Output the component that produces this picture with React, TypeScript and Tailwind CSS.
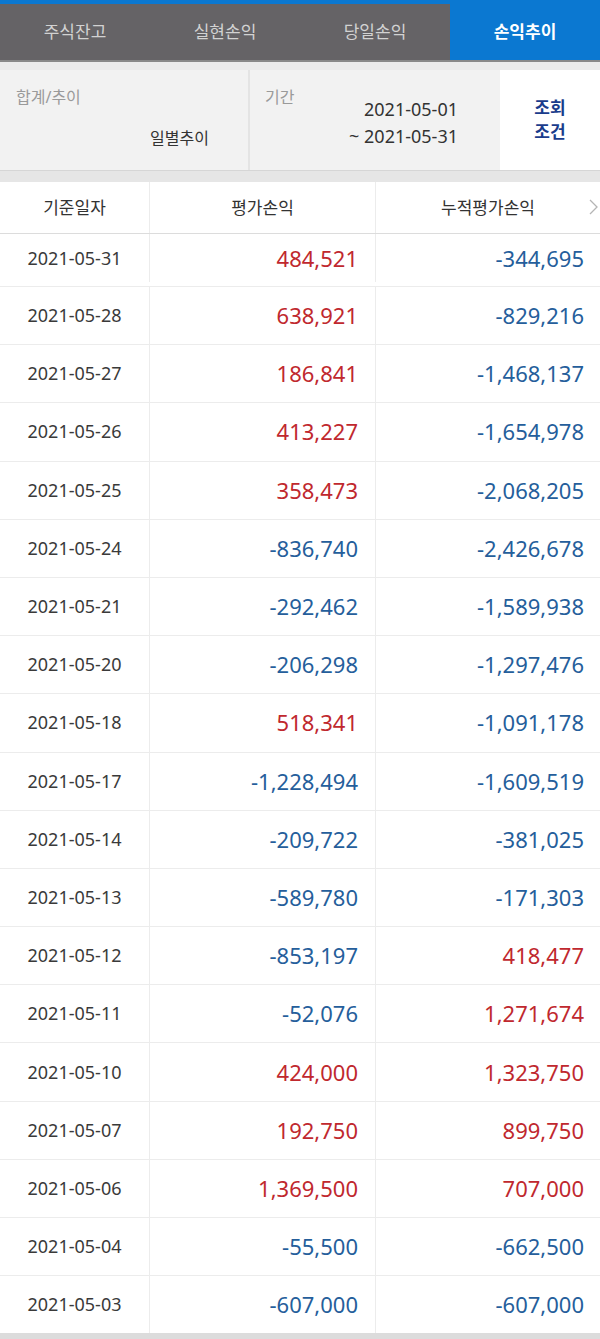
import React from "react";

type Row = { d: string; a: string; b: string };

const rows: Row[] = [
  { d: "2021-05-31", a: "484,521", b: "-344,695" },
  { d: "2021-05-28", a: "638,921", b: "-829,216" },
  { d: "2021-05-27", a: "186,841", b: "-1,468,137" },
  { d: "2021-05-26", a: "413,227", b: "-1,654,978" },
  { d: "2021-05-25", a: "358,473", b: "-2,068,205" },
  { d: "2021-05-24", a: "-836,740", b: "-2,426,678" },
  { d: "2021-05-21", a: "-292,462", b: "-1,589,938" },
  { d: "2021-05-20", a: "-206,298", b: "-1,297,476" },
  { d: "2021-05-18", a: "518,341", b: "-1,091,178" },
  { d: "2021-05-17", a: "-1,228,494", b: "-1,609,519" },
  { d: "2021-05-14", a: "-209,722", b: "-381,025" },
  { d: "2021-05-13", a: "-589,780", b: "-171,303" },
  { d: "2021-05-12", a: "-853,197", b: "418,477" },
  { d: "2021-05-11", a: "-52,076", b: "1,271,674" },
  { d: "2021-05-10", a: "424,000", b: "1,323,750" },
  { d: "2021-05-07", a: "192,750", b: "899,750" },
  { d: "2021-05-06", a: "1,369,500", b: "707,000" },
  { d: "2021-05-04", a: "-55,500", b: "-662,500" },
  { d: "2021-05-03", a: "-607,000", b: "-607,000" },
];

const font = { fontFamily: '"Noto Sans", "Noto Sans CJK KR", sans-serif' };

function Num({ v }: { v: string }) {
  const neg = v.startsWith("-");
  return (
    <span className={neg ? "text-[#255e9b]" : "text-[#c0282e]"}>{v}</span>
  );
}

export default function App() {
  const tabs = ["주식잔고", "실현손익", "당일손익", "손익추이"];
  return (
    <div className="w-[600px] h-[1339px] overflow-hidden bg-[#e6e6e6]" style={font}>
      {/* Tabs */}
      <div className="bg-[#0b78d1] pt-[4px]">
        <div className="flex h-[56px] bg-[#656366]">
          {tabs.map((t, i) => (
            <div
              key={t}
              className={
                i === 3
                  ? "w-[150px] flex items-center justify-center bg-[#0b78d1] text-white font-bold text-[17px] -mt-[4px] pt-[4px] h-[60px]"
                  : "w-[150px] flex items-center justify-center text-[#d2d2d2] text-[17px]"
              }
            >
              {t}
            </div>
          ))}
        </div>
      </div>
      <div className="h-[2px] bg-[#8a8a8a]" />
      <div className="h-[8px] bg-[#ececec]" />
      {/* Filter */}
      <div className="flex h-[100px]">
        <div className="w-[248px] bg-[#f2f2f2] relative px-[16px] pt-[19px]">
          <div className="text-[16px] text-[#9a9a9a] leading-none">합계/추이</div>
          <div className="absolute right-[39px] top-[56px] text-[16px] text-[#333]">일별추이</div>
        </div>
        <div className="w-[2px] bg-[#e4e4e4]" />
        <div className="w-[250px] bg-[#f2f2f2] relative pl-[15px] pt-[19px]">
          <div className="text-[16px] text-[#9a9a9a] leading-none">기간</div>
          <div className="absolute right-[42px] top-[26px] text-right text-[18px] text-[#333] leading-[27px]">
            <div>2021-05-01</div>
            <div>~ 2021-05-31</div>
          </div>
        </div>
        <div className="flex-1 bg-white flex flex-col items-center justify-center text-[#1a3c8c] font-bold text-[17px] leading-[24px]">
          <div>조회</div>
          <div>조건</div>
        </div>
      </div>
      <div className="h-[1px] bg-[#d6d6d6]" />
      <div className="h-[11px] bg-[#e6e6e6]" />
      {/* Table */}
      <div className="bg-white">
        <div className="flex h-[52px] border-b border-[#dcdcdc] text-[17px] text-[#333]">
          <div className="w-[150px] flex items-center justify-center border-r border-[#ececec]">기준일자</div>
          <div className="w-[226px] flex items-center justify-center border-r border-[#ececec]">평가손익</div>
          <div className="flex-1 flex items-center justify-center relative">
            누적평가손익
            <svg className="absolute right-[2px] top-[17px]" width="9" height="16" viewBox="0 0 9 16">
              <path d="M1 1 L8 8 L1 15" fill="none" stroke="#b5b5b5" strokeWidth="1.3" />
            </svg>
          </div>
        </div>
        {rows.map((r, i) => (
          <div
            key={r.d}
            className={
              i === 0
                ? "flex h-[52px] pb-[4px]"
                : "flex h-[58.2px] border-t border-[#ececec]"
            }
          >
            <div className="w-[150px] flex items-center justify-center border-r border-[#ececec] text-[18px] text-[#3a3a3a]">
              {r.d}
            </div>
            <div className="w-[226px] flex items-center justify-end pr-[17px] border-r border-[#ececec] text-[22px]">
              <Num v={r.a} />
            </div>
            <div className="flex-1 flex items-center justify-end pr-[16px] text-[22px]">
              <Num v={r.b} />
            </div>
          </div>
        ))}
      </div>
      <div className="h-[6px] bg-[#dcdcdc]" />
    </div>
  );
}
